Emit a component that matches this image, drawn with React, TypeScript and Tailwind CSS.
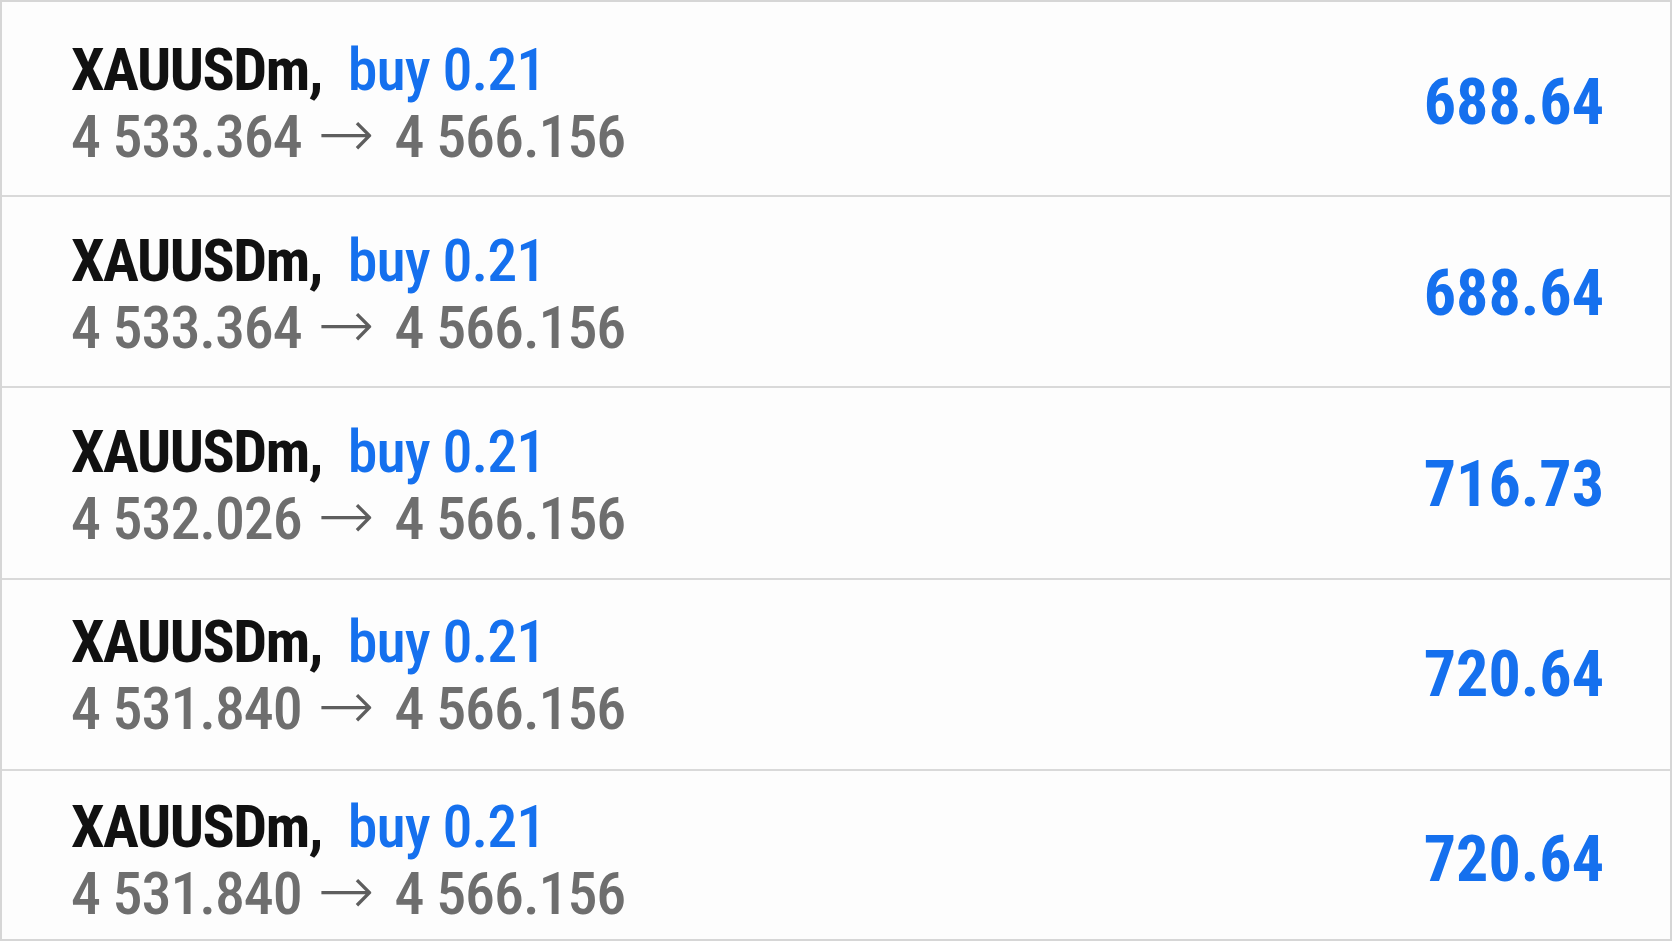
type Row = { from: string; to: string; value: string; h: string; pt: string };

const rows: Row[] = [
  { from: "4 533.364", to: "4 566.156", value: "688.64", h: "h-[195px]", pt: "pt-[9px]" },
  { from: "4 533.364", to: "4 566.156", value: "688.64", h: "h-[191px]", pt: "pt-[4px]" },
  { from: "4 532.026", to: "4 566.156", value: "716.73", h: "h-[192px]", pt: "pt-[4px]" },
  { from: "4 531.840", to: "4 566.156", value: "720.64", h: "h-[191px]", pt: "pt-[0px]" },
  { from: "4 531.840", to: "4 566.156", value: "720.64", h: "h-[168px]", pt: "pt-[10px]" },
];

export default function App() {
  return (
    <div className="w-[1672px] h-[941px] bg-[#fdfdfd] border-2 border-[#d6d6d6] flex flex-col font-['Roboto',sans-serif] font-stretch-condensed overflow-hidden">
      {rows.map((r, i) => (
        <div
          key={i}
          className={`flex items-center justify-between pl-[69px] pr-[66px] shrink-0 ${r.h} ${r.pt} ${
            i < rows.length - 1 ? "border-b-2 border-[#d9d9d9]" : ""
          }`}
        >
          <div className="flex flex-col text-[60px] leading-[67px]">
            <div className="whitespace-nowrap flex items-baseline">
              <span className="font-bold text-[#111111] tracking-[-1.5px]">XAUUSDm,</span>
              <span className="font-medium text-[#1570ee] ml-[26px] tracking-[-1px]">buy 0.21</span>
            </div>
            <div className="whitespace-nowrap text-[#6e6e6e] font-medium flex items-baseline">
              <span className="tracking-[-1.1px]">{r.from}</span>
              <span className="font-['DejaVu_Sans',sans-serif] font-extralight text-[#5e5e5e] ml-[16px] mr-[20px] text-[68px] leading-[60px]">→</span>
              <span className="tracking-[-1.1px]">{r.to}</span>
            </div>
          </div>
          <div className="text-[64px] font-bold text-[#1570ee] leading-none">{r.value}</div>
        </div>
      ))}
    </div>
  );
}
